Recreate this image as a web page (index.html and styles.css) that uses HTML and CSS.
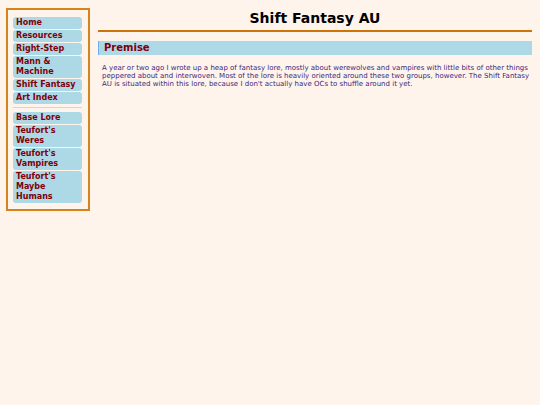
FILE: index.html
```html
<!DOCTYPE html>
<html lang="en">
<head>
<meta charset="utf-8">
<title>Shift Fantasy AU</title>
<link rel="stylesheet" href="styles.css">
</head>
<body>
<nav class="sidebar" aria-label="Site">
<ul class="links">
<li><a href="#">Home</a></li>
<li><a href="#">Resources</a></li>
<li><a href="#">Right-Step</a></li>
<li><a href="#">Mann &amp; Machine</a></li>
<li><a href="#">Shift Fantasy</a></li>
<li><a href="#">Art Index</a></li>
</ul>
<hr class="divider">
<ul class="links">
<li><a href="#">Base Lore</a></li>
<li><a href="#">Teufort's Weres</a></li>
<li><a href="#">Teufort's Vampires</a></li>
<li><a href="#">Teufort's Maybe Humans</a></li>
</ul>
</nav>
<main class="content">
<h1 class="title">Shift Fantasy AU</h1>
<h2 class="heading">Premise</h2>
<p class="text">A year or two ago I wrote up a heap of fantasy lore, mostly about werewolves and vampires with little bits of other things peppered about and interwoven. Most of the lore is heavily oriented around these two groups, however. The Shift Fantasy AU is situated within this lore, because I don't actually have OCs to shuffle around it yet.</p>
</main>
</body>
</html>
```
FILE: styles.css
```css
* {
  box-sizing: border-box;
}

body {
  margin: 0;
  padding: 8px 8px 8px 6px;
  display: flex;
  align-items: flex-start;
  gap: 8px;
  background: #fff4eb;
  font-family: "DejaVu Sans", Verdana, sans-serif;
}

.sidebar {
  flex: 0 0 84px;
  padding: 7px 6px 6px 5px;
  border: 2px solid #d4841c;
}

.links {
  display: flex;
  flex-direction: column;
  gap: 1px;
  margin: 0;
  padding: 0;
  list-style: none;
}

.links a {
  display: block;
  padding: 1px 3px;
  border-radius: 3px;
  background: #add8e6;
  color: #800008;
  font-size: 8px;
  font-weight: bold;
  line-height: 10px;
  text-decoration: none;
}

.divider {
  height: 1px;
  margin: 3px 0 4px;
  border: 0;
  background: #f5cf9c;
}

.content {
  flex: 1;
  min-width: 0;
}

.title {
  margin: 0;
  padding-bottom: 2px;
  border-bottom: 2px solid #cc7408;
  color: #000;
  font-size: 14px;
  line-height: 20px;
  text-align: center;
}

.heading {
  margin: 9px 0;
  padding: 0 5px;
  border-left: 1px solid #6cb0f4;
  background: #add8e6;
  color: #800008;
  font-size: 10px;
  line-height: 14px;
}

.text {
  margin: 0;
  padding-left: 4px;
  color: #38287c;
  font-size: 7px;
  line-height: 8px;
}
```
